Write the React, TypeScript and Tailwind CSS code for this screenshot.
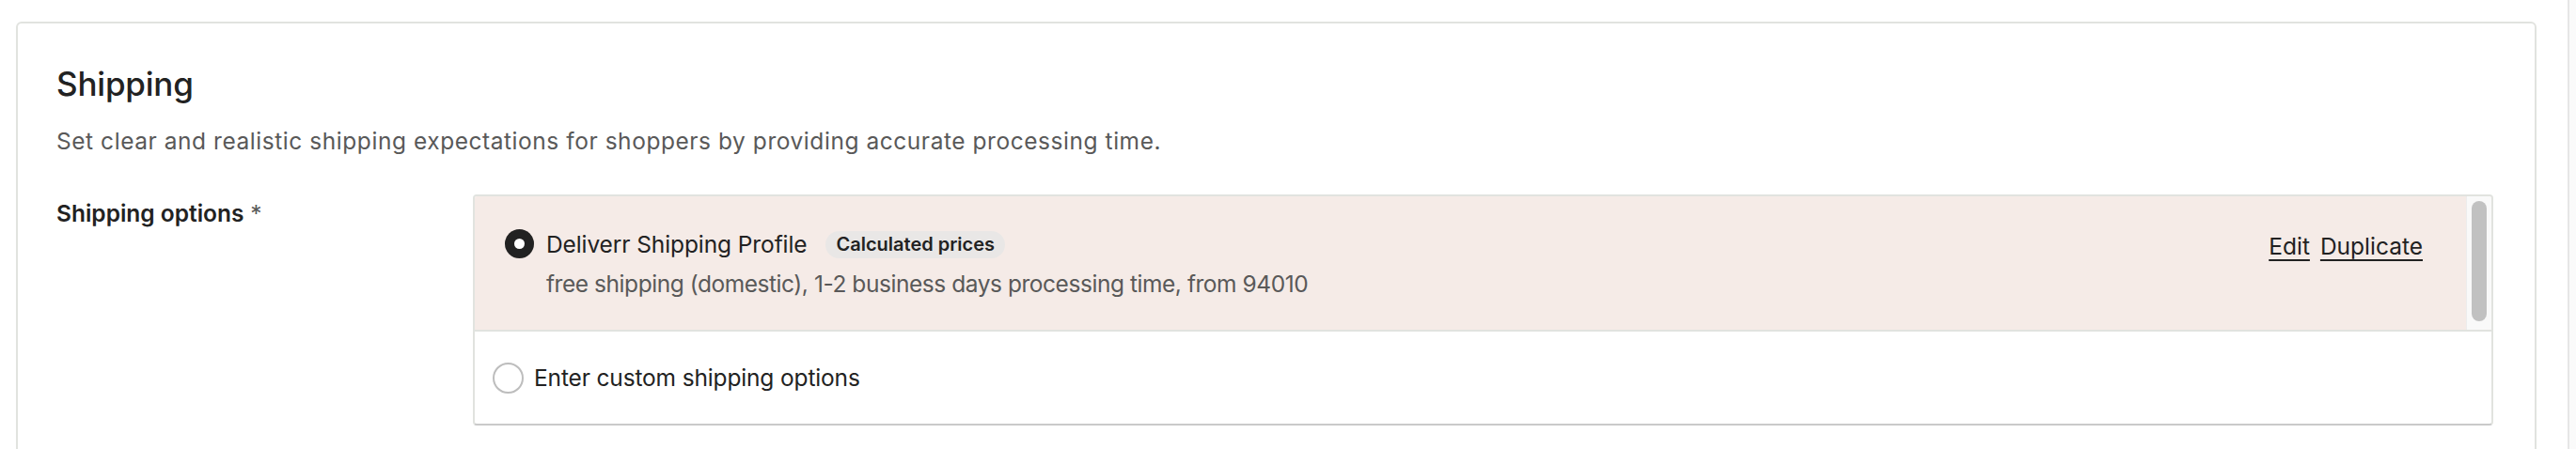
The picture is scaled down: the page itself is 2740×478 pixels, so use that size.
import React from "react";

export default function App() {
  return (
    <div className="flex w-[2740px] h-[478px] overflow-hidden bg-white text-[#222222]" style={{ fontFamily: "Inter, 'Liberation Sans', Arial, sans-serif" }}>
      <div className="flex-1 pl-[17px] pt-[23px] pr-[33px]">
        <div className="border-2 border-[#e1e3df] rounded-[6px] pl-[41px] pr-[44px] pt-[40px] pb-[120px]">
          <h2 className="text-[35px] leading-[48px] font-medium tracking-[-0.2px]">Shipping</h2>
          <p className="mt-[19px] text-[24.5px] leading-[36px] text-[#595959] tracking-[0.55px]">
            Set clear and realistic shipping expectations for shoppers by providing accurate processing time.
          </p>
          <div className="mt-[39px] flex">
            <div className="w-[443px] shrink-0 pt-[2px]">
              <span className="text-[24.5px] leading-[36px] font-semibold">Shipping options</span>
              <span className="text-[24.5px] leading-[36px] text-[#595959]"> *</span>
            </div>
            <div className="flex-1 border-2 border-[#e1e3df] border-b-[#cacaca] rounded-[4px] overflow-hidden">
              <div className="flex bg-[#f5ebe7] border-b-2 border-[#e1e3df]">
                <div className="flex-1 flex items-start pl-[32px] pr-[46px] pt-[33px] pb-[31px]">
                  <div className="mt-[2px] w-[31px] h-[31px] rounded-full bg-[#222222] flex items-center justify-center shrink-0">
                    <div className="w-[11px] h-[11px] rounded-full bg-white" />
                  </div>
                  <div className="ml-[13px] flex-1">
                    <div className="flex items-center h-[36px]">
                      <span className="text-[24.5px] leading-[36px] tracking-[-0.1px]">Deliverr Shipping Profile</span>
                      <span className="ml-[20px] h-[29px] px-[11px] rounded-full bg-[#e9e7e6] text-[20px] leading-[29px] font-semibold">Calculated prices</span>
                    </div>
                    <div className="mt-[6px] text-[24.5px] leading-[36px] text-[#595959] tracking-[-0.45px]">
                      free shipping (domestic), 1-2 business days processing time, from 94010
                    </div>
                  </div>
                  <div className="flex gap-[11px] text-[24.5px] leading-[36px] mt-[2px]">
                    <span className="underline underline-offset-[5px]">Edit</span>
                    <span className="underline underline-offset-[5px]">Duplicate</span>
                  </div>
                </div>
                <div className="w-[27px] shrink-0 bg-[#f9f9f9] border-l border-[#ececec] flex justify-center pt-[5px] pb-[6px]">
                  <div className="w-[16px] h-[128px] rounded-full bg-[#c1c1c1]" />
                </div>
              </div>
              <div className="flex items-center h-[98px] pl-[19px]">
                <div className="w-[33px] h-[33px] rounded-full border-2 border-[#bdbdbd] bg-white shrink-0" />
                <span className="ml-[11px] text-[24.5px] leading-[36px] tracking-[-0.15px]">Enter custom shipping options</span>
              </div>
            </div>
          </div>
        </div>
      </div>
      <div className="w-[9px] shrink-0 border-l-2 border-[#e6e6e6] bg-[#fafafa]" />
    </div>
  );
}
